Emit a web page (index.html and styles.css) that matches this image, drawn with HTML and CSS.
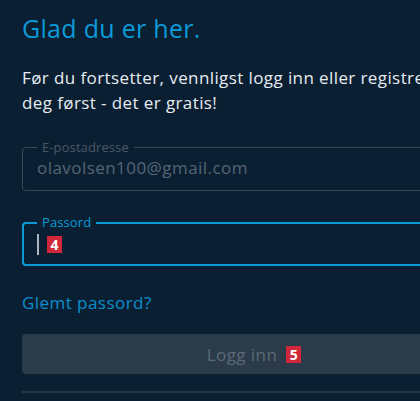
FILE: index.html
```html
<!DOCTYPE html>
<html lang="no">
<head>
<meta charset="utf-8">
<link rel="stylesheet" href="styles.css">
</head>
<body>
<main class="panel">
  <h1 class="title">Glad du er her.</h1>
  <p class="intro">Før du fortsetter, vennligst logg inn eller registrer deg først - det er gratis!</p>
  <form class="form">
    <fieldset class="field field-disabled">
      <legend class="field-label">E-postadresse</legend>
      <div class="field-value">olavolsen100@gmail.com</div>
    </fieldset>
    <fieldset class="field field-active">
      <legend class="field-label">Passord</legend>
      <div class="field-value"><span class="caret"></span><span class="badge">4</span></div>
    </fieldset>
    <a class="forgot" href="#">Glemt passord?</a>
    <button type="button" class="submit">Logg inn <span class="badge">5</span></button>
  </form>
  <hr class="divider">
</main>
</body>
</html>
```

FILE: styles.css
```css
html, body {
  margin: 0;
  padding: 0;
  background: #0b1f33;
  overflow: hidden;
}
body {
  font-family: "Open Sans", "Noto Sans", sans-serif;
  color: #e6ecf1;
}
.panel {
  width: 464px;
  padding: 10px 0 0 22px;
}
.title {
  margin: 0;
  font-size: 25px;
  letter-spacing: 0.3px;
  font-weight: 400;
  line-height: 36px;
  color: #0a9bd8;
}
.intro {
  margin: 19px 0 0;
  font-size: 17px;
  letter-spacing: 0.4px;
  line-height: 25px;
  width: 440px;
}
.form {
  display: flex;
  flex-direction: column;
  margin-top: 26px;
}
.field {
  margin: 0;
  padding: 0 14px;
  border-radius: 4px;
  height: 50px;
  box-sizing: border-box;
  min-width: 0;
}
.field-label {
  font-size: 13px;
  letter-spacing: 0.1px;
  line-height: 13px;
  padding: 0 5px;
}
.field-value {
  font-size: 17px;
  letter-spacing: 0.45px;
  line-height: 22px;
  display: flex;
  align-items: flex-start;
  margin-top: 3px;
  white-space: nowrap;
}
.field-disabled {
  border: 1px solid #3a4856;
}
.field-disabled .field-label {
  color: #4a5967;
}
.field-disabled .field-value {
  color: #566573;
}
.field-active {
  border: 2px solid #0a9bd8;
  margin-top: 25px;
  padding: 0 13px;
}
.field-active .field-label {
  color: #0a9bd8;
}
.field-active .field-value {
  margin-top: 5px;
}
.caret {
  display: block;
  width: 2px;
  height: 21px;
  background: #aab6c1;
}
.badge {
  display: inline-block;
  background: #d0283a;
  color: #fff;
  font-weight: 700;
  font-size: 14px;
  letter-spacing: 0;
  line-height: 17px;
  width: 15px;
  text-align: center;
}
.field-active .badge {
  margin-left: 8px;
  margin-top: 2px;
}
.forgot {
  margin-top: 26px;
  font-size: 17px;
  letter-spacing: 0.45px;
  line-height: 22px;
  font-weight: 500;
  color: #0b8fcc;
  text-decoration: none;
  align-self: flex-start;
}
.submit {
  margin-top: 20px;
  height: 40px;
  border: 0;
  border-radius: 4px;
  background: #2c3b49;
  color: #5a6a78;
  font-family: inherit;
  font-size: 17px;
  letter-spacing: 0.45px;
  display: flex;
  align-items: center;
  justify-content: center;
  gap: 9px;
}
.divider {
  margin: 17px 0 0;
  border: 0;
  height: 2px;
  background: #243648;
}
```
